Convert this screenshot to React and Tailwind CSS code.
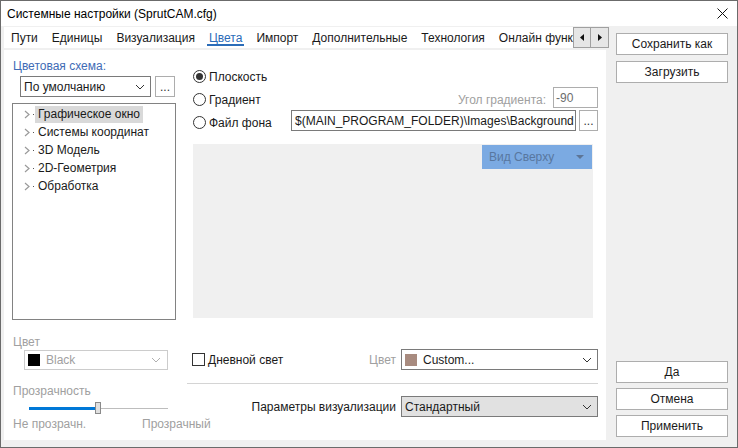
import React from 'react';

const tabs = ['Пути', 'Единицы', 'Визуализация', 'Цвета', 'Импорт', 'Дополнительные', 'Технология', 'Онлайн функции'];
const treeItems = ['Графическое окно', 'Системы координат', '3D Модель', '2D-Геометрия', 'Обработка'];

const Chevron = ({ color = '#333' }) => (
  <svg width="10" height="6" viewBox="0 0 10 6">
    <path d="M1 1 L5 5 L9 1" fill="none" stroke={color} strokeWidth="1" />
  </svg>
);

const Radio = ({ checked, label }) => (
  <div className="flex items-center">
    <div className="w-[13px] h-[13px] rounded-full border border-[#333] bg-white flex items-center justify-center">
      {checked && <div className="w-[7px] h-[7px] rounded-full bg-[#333]"></div>}
    </div>
    <span className="ml-[3px]">{label}</span>
  </div>
);

const Button = ({ children, className = '' }) => (
  <div className={`h-[22px] border border-[#adadad] bg-white flex items-center justify-center ${className}`}>
    {children}
  </div>
);

const App = () => {
  return (
    <div
      className="w-[738px] h-[448px] border border-[#6b6b6b] bg-white text-[12px] text-[#1a1a1a] overflow-hidden"
      style={{ fontFamily: '"Liberation Sans", Arial, sans-serif' }}
    >
      {/* title bar */}
      <div className="h-[25px] flex items-center justify-between pl-[6px] pr-[9px]">
        <span className="text-[12px] text-black">Системные настройки (SprutCAM.cfg)</span>
        <svg width="11" height="11" viewBox="0 0 11 11">
          <path d="M0.5 0.5 L10.5 10.5 M10.5 0.5 L0.5 10.5" stroke="#111" strokeWidth="1" />
        </svg>
      </div>

      <div className="h-[421px] bg-[#f0f0f0] flex">
        {/* main tab area */}
        <div className="w-[605px] pl-[3px] pt-[1px] flex flex-col">
          <div className="h-[21px] flex w-[605px]">
            <div className="flex-1 bg-white flex overflow-hidden whitespace-nowrap">
              {tabs.map((t) => (
                <div
                  key={t}
                  className={`px-[7px] flex items-center relative ${t === 'Цвета' ? 'text-[#2b6cb8]' : ''}`}
                >
                  {t}
                  {t === 'Цвета' && (
                    <div className="absolute left-[5px] right-[5px] bottom-[2px] h-[2px] bg-[#2b6cb8]"></div>
                  )}
                </div>
              ))}
            </div>
            <div className="flex h-[21px]">
              <div className="w-[18px] border border-[#a0a0a0] bg-[#e6e6e6] flex items-center justify-center">
                <svg width="4" height="7" viewBox="0 0 4 7"><path d="M4 0 L0 3.5 L4 7 Z" fill="#111" /></svg>
              </div>
              <div className="w-[18px] border border-l-0 border-[#a0a0a0] bg-[#e6e6e6] flex items-center justify-center">
                <svg width="4" height="7" viewBox="0 0 4 7"><path d="M0 0 L4 3.5 L0 7 Z" fill="#111" /></svg>
              </div>
            </div>
          </div>

          {/* content panel */}
          <div className="mt-[2px] h-[390px] w-[602px] bg-white flex">
            {/* left column */}
            <div className="w-[183px] shrink-0 pl-[9px] pt-[8px] flex flex-col">
              <div className="h-[16px] leading-[16px] text-[#3e6bb5]">Цветовая схема:</div>
              <div className="mt-[2px] ml-[7px] flex">
                <div className="w-[131px] h-[21px] border border-[#7a7a7a] flex items-center justify-between pl-[3px] pr-[5px]">
                  <span>По умолчанию</span>
                  <Chevron />
                </div>
                <div className="ml-[4px] w-[20px] h-[21px] border border-[#adadad] flex items-center justify-center text-[#333]">...</div>
              </div>
              <div className="mt-[6px] -ml-[1px] w-[164px] h-[217px] border border-[#828282] pt-[1px]">
                {treeItems.map((it, i) => (
                  <div key={it} className="h-[18px] flex items-center">
                    <div className="w-[20px] flex items-center justify-end pr-[3px]">
                      <svg width="6" height="9" viewBox="0 0 6 9">
                        <path d="M1 1 L5 4.5 L1 8" fill="none" stroke="#9a9a9a" strokeWidth="1.2" />
                      </svg>
                    </div>
                    <div className="w-[1px] h-[1px] bg-[#555]"></div>
                    <div className={`ml-[1px] px-[3px] h-[17px] leading-[17px] ${i === 0 ? 'bg-[#d9d9d9]' : ''}`}>{it}</div>
                  </div>
                ))}
              </div>

              <div className="mt-[14px] h-[16px] leading-[16px] text-[#a0a0a0]">Цвет</div>
              <div className="ml-[11px] w-[144px] h-[20px] border border-[#cccccc] flex items-center pl-[3px] pr-[6px]">
                <div className="w-[12px] h-[12px] bg-black"></div>
                <span className="ml-[6px] text-[#a0a0a0] flex-1">Black</span>
                <Chevron color="#b0b0b0" />
              </div>

              <div className="mt-[13px] h-[16px] leading-[16px] text-[#a0a0a0]">Прозрачность</div>
              <div className="mt-[3px] ml-[16px] w-[139px] h-[12px] relative">
                <div className="absolute left-0 top-[5px] w-[69px] h-[3px] bg-[#0078d7]"></div>
                <div className="absolute left-[69px] right-0 top-[6px] h-[1px] bg-[#bdbdbd]"></div>
                <div className="absolute left-[66px] top-0 w-[6px] h-[12px] bg-[#e0e0e0] border border-[#8a8a8a]"></div>
              </div>
              <div className="mt-[2px] h-[16px] leading-[16px] text-[#a0a0a0] flex whitespace-nowrap">
                <span className="w-[129px] shrink-0">Не прозрачн.</span>
                <span className="shrink-0">Прозрачный</span>
              </div>
            </div>

            {/* right column */}
            <div className="w-[411px] pt-[15px] flex flex-col">
              <div className="h-[23px] flex items-center pl-[6px]">
                <Radio checked label="Плоскость" />
              </div>
              <div className="h-[23px] flex items-center pl-[6px]">
                <Radio label="Градиент" />
                <div className="flex-1"></div>
                <span className="text-[#a0a0a0]">Угол градиента:</span>
                <div className="ml-[7px] mb-[4px] w-[45px] h-[21px] border border-[#adadad] flex items-center pl-[2px] text-[#6d6d6d]">-90</div>
              </div>
              <div className="h-[23px] flex items-center pl-[6px]">
                <Radio label="Файл фона" />
                <div className="flex-1"></div>
                <div className="mb-[4px] w-[285px] h-[21px] border border-[#7a7a7a] flex items-center pl-[3px] whitespace-nowrap overflow-hidden">
                  $(MAIN_PROGRAM_FOLDER)\Images\Background
                </div>
                <div className="ml-[3px] mb-[4px] w-[19px] h-[21px] border border-[#adadad] flex items-center justify-center text-[#333]">...</div>
              </div>

              <div className="mt-[10px] ml-[6px] w-[400px] h-[174px] bg-[#f0f0f0] flex justify-end pt-[1px] pr-[1px]">
                <div className="w-[110px] h-[24px] bg-[#7baae2] flex items-center justify-between pl-[7px] pr-[8px] text-[#58779f]">
                  <span>Вид Сверху</span>
                  <svg width="8" height="4" viewBox="0 0 8 4"><path d="M0 0 L8 0 L4 4 Z" fill="#5d7596" /></svg>
                </div>
              </div>

              <div className="mt-[31px] h-[21px] flex items-center pl-[5px]">
                <div className="w-[13px] h-[13px] border border-[#333] bg-white"></div>
                <span className="ml-[3px]">Дневной свет</span>
                <div className="flex-1"></div>
                <span className="text-[#a0a0a0]">Цвет</span>
                <div className="ml-[5px] w-[197px] h-[21px] border border-[#7a7a7a] flex items-center pl-[3px] pr-[5px]">
                  <div className="w-[12px] h-[12px] bg-[#a88b7f]"></div>
                  <span className="ml-[6px] flex-1">Custom...</span>
                  <Chevron />
                </div>
              </div>

              <div className="mt-[13px] h-[1px] w-[411px] bg-[#d4d4d4]"></div>

              <div className="mt-[12px] h-[21px] flex items-center justify-end">
                <span>Параметры визуализации</span>
                <div className="ml-[5px] w-[197px] h-[21px] border border-[#7a7a7a] bg-[#e1e1e1] flex items-center pl-[3px] pr-[5px]">
                  <span className="flex-1">Стандартный</span>
                  <Chevron />
                </div>
              </div>
            </div>
          </div>
        </div>

        {/* right buttons */}
        <div className="flex-1 flex flex-col pl-[10px] pt-[7px] pb-[10px]">
          <Button className="w-[112px]">Сохранить как</Button>
          <Button className="w-[112px] mt-[6px]">Загрузить</Button>
          <div className="flex-1"></div>
          <Button className="w-[112px]">Да</Button>
          <Button className="w-[112px] mt-[5px]">Отмена</Button>
          <Button className="w-[112px] mt-[5px]">Применить</Button>
        </div>
      </div>
    </div>
  );
};

export default App;
